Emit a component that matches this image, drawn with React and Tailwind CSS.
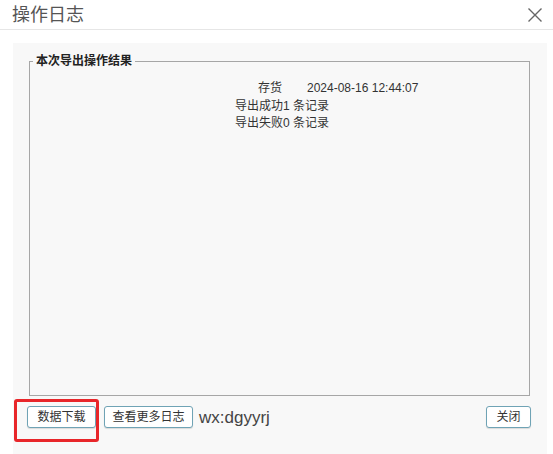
import React from 'react';

const font = { fontFamily: '"Liberation Sans", "Noto Sans CJK SC", sans-serif' };

const Btn = ({ children, className = '' }) => (
    <button
        className={`h-[22px] rounded-[3px] border border-[#6fa3b5] bg-white text-[12px] leading-none text-[#333] shadow-[0_1px_1px_rgba(0,0,0,0.12)] ${className}`}
    >
        {children}
    </button>
);

export default function App() {
    return (
        <div className="relative w-[553px] h-[454px] bg-white overflow-hidden" style={font}>
            {/* header */}
            <div className="h-[30px] border-b border-[#e6e6e6] flex items-center justify-between pl-[12px] pr-[10px]">
                <span className="text-[18px] leading-none text-[#555]">操作日志</span>
                <svg width="16" height="16" viewBox="0 0 16 16" className="text-[#666]">
                    <path d="M1.5 1.5 L14.5 14.5 M14.5 1.5 L1.5 14.5" stroke="currentColor" strokeWidth="1.4" fill="none" />
                </svg>
            </div>

            {/* panel */}
            <div className="ml-[13px] mr-[6px] mt-[13px] h-[411px] bg-[#f8f8f8] pt-[10px]">
                <fieldset className="ml-[16px] mr-[17px] h-[343px] border border-[#a6a6a6]">
                    <legend className="ml-[3px] px-[3px] text-[12px] leading-[16px] font-bold text-[#222]">本次导出操作结果</legend>
                    <div className="pl-[205px] pt-[11px] text-[12px] leading-[17.5px] text-[#333]">
                        <div className="flex">
                            <span className="w-[47px] text-right">存货</span>
                            <span className="ml-[25px]">2024-08-16 12:44:07</span>
                        </div>
                        <div>导出成功1 条记录</div>
                        <div>导出失败0 条记录</div>
                    </div>
                </fieldset>

                <div className="mt-[10px] flex items-center pl-[14px] pr-[16px]">
                    <Btn className="w-[69px]">数据下载</Btn>
                    <Btn className="ml-[8px] w-[89px]">查看更多日志</Btn>
                    <span className="ml-[6px] text-[17px] leading-none text-[#444]">wx:dgyyrj</span>
                    <Btn className="ml-auto w-[45px]">关闭</Btn>
                </div>
            </div>

            {/* red highlight */}
            <div className="absolute left-[14px] top-[399px] w-[85px] h-[43px] border-[3px] border-[#e8262a] rounded-[3px]" />
        </div>
    );
}
